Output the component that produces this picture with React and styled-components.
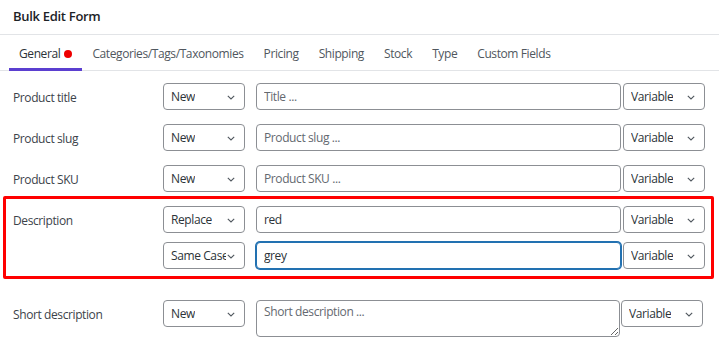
import React from "react";
import styled, { createGlobalStyle, css } from "styled-components";

const Global = createGlobalStyle`
  html, body { margin: 0; padding: 0; background: #fff; }
  body { font-family: "Open Sans", "Noto Sans", sans-serif; color: #3c434a; }
  * { box-sizing: border-box; }
`;

const Page = styled.div`
  width: 719px;
  height: 343px;
  overflow: hidden;
  background: #fff;
`;

const Header = styled.div`
  height: 35px;
  padding: 0 13px 2px;
  display: flex;
  align-items: center;
  border-bottom: 1px solid #e2e4e7;
  font-size: 13px;
  font-weight: 600;
  color: #1d2327;
  letter-spacing: -0.3px;
`;

const Tabs = styled.div`
  display: flex;
  height: 36px;
  padding: 0 9px;
  border-bottom: 1px solid #e2e4e7;
`;

const Tab = styled.div`
  display: flex;
  align-items: center;
  gap: 4px;
  padding: 4px 10px 0;
  font-size: 12px;
  color: #50575e;
  letter-spacing: -0.4px;
  border-bottom: 3px solid transparent;
  margin-bottom: -1px;
  ${(p) =>
    p.$active &&
    css`
      color: #2c3338;
      border-bottom-color: #5b3fd0;
    `}
`;

const Dot = styled.span`
  width: 8px;
  height: 8px;
  border-radius: 50%;
  background: #ee0000;
`;

const Form = styled.div`
  padding: 12px 0 0 13px;
  display: flex;
  flex-direction: column;
`;

const Row = styled.div`
  display: grid;
  grid-template-columns: 150px 82px ${(p) => p.$inputCol ?? 376}px 84px;
  align-items: start;
  margin-bottom: ${(p) => p.$mb ?? 14}px;
`;

const Label = styled.div`
  font-size: 12px;
  color: #3c434a;
  height: 27px;
  line-height: 29px;
  letter-spacing: -0.4px;
`;

const controlBase = css`
  height: 27px;
  border: 1px solid #8c8f94;
  border-radius: 4px;
  background: #fff;
  font-family: inherit;
  font-size: 12px;
  letter-spacing: -0.4px;
`;

const SelectBox = styled.div`
  ${controlBase};
  position: relative;
  display: flex;
  align-items: center;
  width: 82px;
  padding: 0 18px 0 7px;
  color: #2c3338;
  margin-left: ${(p) => p.$ml ?? 0}px;
`;

const SelectText = styled.span`
  white-space: nowrap;
  overflow: hidden;
  display: block;
`;

const Chevron = styled.svg`
  position: absolute;
  right: 9px;
  top: 50%;
  margin-top: -2px;
  width: 8px;
  height: 5px;
`;

const Input = styled.input`
  ${controlBase};
  display: block;
  width: 365px;
  margin-left: 11px;
  padding: 0 7px;
  color: #2c3338;
  outline: none;
  &::placeholder { color: #646970; opacity: 1; }
  ${(p) =>
    p.$focus &&
    css`
      border-color: #2271b1;
      box-shadow: 0 0 0 1px #2271b1;
    `}
`;

const TextArea = styled.textarea`
  ${controlBase};
  height: 37px;
  width: 364px;
  margin-left: 11px;
  padding: 2px 7px;
  color: #2c3338;
  resize: vertical;
  outline: none;
  display: block;
  &::placeholder { color: #646970; opacity: 1; }
`;

const Highlight = styled.div`
  border: 3px solid #ff0000;
  border-radius: 2px;
  width: 711px;
  margin: -10px 0 21px -10px;
  padding: 7px 0 7px 7px;
`;

const Col = styled.div`
  display: flex;
  flex-direction: column;
  gap: 9px;
`;

function Select({ value, ml }) {
  return (
    <SelectBox $ml={ml}>
      <SelectText>{value}</SelectText>
      <Chevron viewBox="0 0 8 5">
        <path d="M0.8 0.8L4 4L7.2 0.8" fill="none" stroke="#50575e" strokeWidth="1.1" />
      </Chevron>
    </SelectBox>
  );
}

export default function App() {
  const tabs = [
    "General",
    "Categories/Tags/Taxonomies",
    "Pricing",
    "Shipping",
    "Stock",
    "Type",
    "Custom Fields",
  ];
  const simple = [
    ["Product title", "Title ..."],
    ["Product slug", "Product slug ..."],
    ["Product SKU", "Product SKU ..."],
  ];
  return (
    <Page>
      <Global />
      <Header>Bulk Edit Form</Header>
      <Tabs>
        {tabs.map((t, i) => (
          <Tab key={t} $active={i === 0}>
            {t}
            {i === 0 && <Dot />}
          </Tab>
        ))}
      </Tabs>
      <Form>
        {simple.map(([l, ph]) => (
          <Row key={l}>
            <Label>{l}</Label>
            <Select value="New" />
            <Input placeholder={ph} readOnly />
            <Select value="Variable" ml={2} />
          </Row>
        ))}
        <Highlight>
          <Row $mb={0}>
            <Label>Description</Label>
            <Col>
              <Select value="Replace" />
              <Select value="Same Case" />
            </Col>
            <Col>
              <Input value="red" readOnly />
              <Input value="grey" readOnly $focus />
            </Col>
            <Col>
              <Select value="Variable" ml={2} />
              <Select value="Variable" ml={2} />
            </Col>
          </Row>
        </Highlight>
        <Row $inputCol={375}>
          <Label>Short description</Label>
          <Select value="New" />
          <TextArea placeholder="Short description ..." readOnly />
          <Select value="Variable" ml={1} />
        </Row>
      </Form>
    </Page>
  );
}
